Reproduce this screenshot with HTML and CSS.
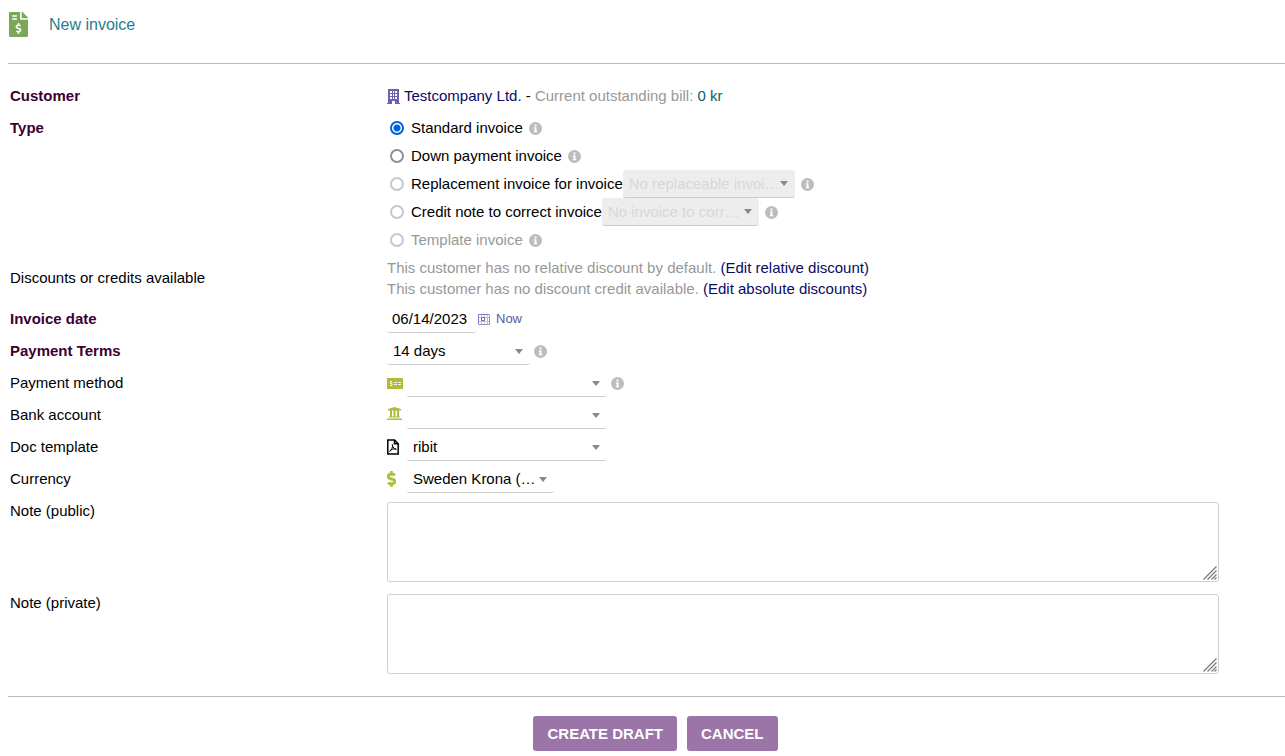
FILE: index.html
```html
<!DOCTYPE html>
<html lang="en">
<head>
<meta charset="utf-8">
<title>New invoice</title>
<link rel="stylesheet" href="styles.css">
</head>
<body>
<svg class="defs" aria-hidden="true">
  <symbol id="info" viewBox="0 0 13 13"><circle cx="6.5" cy="6.5" r="6.5" fill="#bcbcbc"/><path d="M5.5 2.5h2v1.8h-2zM4.8 5.3h2.7v3.8h.8v1.2H4.8V9.1h.8V6.5h-.8z" fill="#fff"/></symbol>
  <symbol id="arrow" viewBox="0 0 8 5"><path d="M0 0h8L4 5z" fill="#888"/></symbol>
  <symbol id="grip" viewBox="0 0 14 14"><path d="M.5 13.5l13-13M4.5 13.5l9-9M8.5 13.5l5-5M11.5 13.5l2-2" stroke="#777" stroke-width="1.2"/></symbol>
</svg>
<header class="title">
  <svg class="title-icon" viewBox="0 0 384 512" preserveAspectRatio="none" aria-hidden="true"><path fill="#7ca659" d="M377 105L279.1 7c-4.5-4.5-10.6-7-17-7H256v128h128v-6.1c0-6.3-2.5-12.4-7-16.9zm-153 31V0H24C10.7 0 0 10.7 0 24v464c0 13.3 10.7 24 24 24h336c13.3 0 24-10.7 24-24V160H248c-13.2 0-24-10.8-24-24zM64 72c0-4.420 3.580-8 8-8h80c4.420 0 8 3.580 8 8v16c0 4.420-3.580 8-8 8H72c-4.420 0-8-3.580-8-8V72zm0 80v-16c0-4.420 3.580-8 8-8h80c4.420 0 8 3.580 8 8v16c0 4.420-3.580 8-8 8H72c-4.420 0-8-3.580-8-8zm144 263.880V440c0 4.420-3.580 8-8 8h-16c-4.420 0-8-3.580-8-8v-24.290c-11.290-.58-22.270-4.520-31.370-11.350-3.900-2.930-4.100-8.770-.57-12.140l11.750-11.210c2.770-2.640 6.890-2.760 10.130-.73 3.870 2.420 8.260 3.720 12.820 3.720h28.110c6.500 0 11.800-5.920 11.800-13.190 0-5.950-3.610-11.190-8.770-12.730l-45-13.500c-18.590-5.580-31.580-23.420-31.580-43.390 0-24.520 19.050-44.440 42.670-45.070V232c0-4.420 3.580-8 8-8h16c4.420 0 8 3.580 8 8v24.290c11.290.58 22.270 4.510 31.370 11.350 3.900 2.930 4.100 8.770.57 12.140l-11.750 11.210c-2.770 2.640-6.890 2.760-10.130.73-3.870-2.430-8.260-3.720-12.820-3.720h-28.110c-6.500 0-11.800 5.920-11.800 13.190 0 5.950 3.610 11.190 8.770 12.730l45 13.500c18.590 5.580 31.580 23.420 31.580 43.390 0 24.530-19.050 44.440-42.670 45.070z"/></svg>
  <h1>New invoice</h1>
</header>
<form class="invoice">
  <div class="row">
    <span class="label required">Customer</span>
    <div class="value">
      <svg class="building" viewBox="0 0 13 15" aria-hidden="true"><path fill="#6c64ab" fill-rule="evenodd" d="M1 0h11v14h1v1H8v-3H5v3H0v-1h1zM3 2v2h2V2zm3 0v2h1V2zm2 0v2h2V2zM3 5v2h2V5zm3 0v2h1V5zm2 0v2h2V5zM3 8v2h2V8zm3 0v2h1V8zm2 0v2h2V8z"/></svg>
      <span><a href="#">Testcompany Ltd.</a> - <span class="muted">Current outstanding bill:</span> <a class="amount" href="#">0 kr</a></span>
    </div>
  </div>
  <div class="row types">
    <span class="label required" id="type-label">Type</span>
    <div class="options" role="radiogroup" aria-labelledby="type-label">
      <div class="option"><input type="radio" name="type" id="t1" checked><label for="t1">Standard invoice</label><svg class="info"><use href="#info"/></svg></div>
      <div class="option"><input type="radio" name="type" id="t2"><label for="t2">Down payment invoice</label><svg class="info"><use href="#info"/></svg></div>
      <div class="option"><input type="radio" name="type" id="t3" disabled><label for="t3">Replacement invoice for invoice</label><span class="select replace"><select disabled aria-label="Replaceable invoice"><option>No replaceable invoi…</option></select><svg><use href="#arrow"/></svg></span><svg class="info"><use href="#info"/></svg></div>
      <div class="option"><input type="radio" name="type" id="t4" disabled><label for="t4">Credit note to correct invoice</label><span class="select correct"><select disabled aria-label="Invoice to correct"><option>No invoice to corr…</option></select><svg><use href="#arrow"/></svg></span><svg class="info"><use href="#info"/></svg></div>
      <div class="option"><input type="radio" name="type" id="t5" disabled><label class="muted" for="t5">Template invoice</label><svg class="info"><use href="#info"/></svg></div>
    </div>
  </div>
  <div class="row discounts">
    <span class="label">Discounts or credits available</span>
    <div>
      <p><span class="muted">This customer has no relative discount by default.</span> <a href="#">(Edit relative discount)</a></p>
      <p><span class="muted">This customer has no discount credit available.</span> <a href="#">(Edit absolute discounts)</a></p>
    </div>
  </div>
  <div class="row">
    <label class="label required" for="date">Invoice date</label>
    <div class="value">
      <input class="date" id="date" type="text" value="06/14/2023">
      <button class="calendar" type="button" aria-label="Open calendar"><svg viewBox="0 0 12 11"><path fill="#fff" stroke="#c4c4c4" d="M.5.5h11v10H.5zM3.500 1v9M6.500 1v9M9.500 1v9M1 3.500h10M1 7.500h10"/><path fill="none" stroke="#999" d="M1 10.500h10.500V1"/><path fill="none" stroke="#8579c4" d="M.5 10V.5H11"/><path fill="#fff" stroke="#9050b0" d="M3.500 3.500h3v3h-3z"/></svg></button>
      <button class="now" type="button">Now</button>
    </div>
  </div>
  <div class="row">
    <label class="label required" for="terms">Payment Terms</label>
    <div class="value"><span class="select terms"><select id="terms"><option>14 days</option></select><svg><use href="#arrow"/></svg></span><svg class="info"><use href="#info"/></svg></div>
  </div>
  <div class="row">
    <label class="label" for="method">Payment method</label>
    <div class="value"><span class="lead"><svg width="16" height="11" viewBox="0 0 16 11"><path fill="#b0bb39" d="M0 0h16v11H0z"/><path fill="none" stroke="#fff" stroke-width=".9" d="M5 3.500H3.500v2H5v2H3M7 4.500h3M11 4.500h3M7 6.500h3M11 6.500h3"/></svg></span><span class="select wide"><select id="method"><option></option></select><svg><use href="#arrow"/></svg></span><svg class="info"><use href="#info"/></svg></div>
  </div>
  <div class="row">
    <label class="label" for="bank">Bank account</label>
    <div class="value"><span class="lead bank"><svg width="15" height="13" viewBox="0 0 15 13"><path fill="#b0bb39" d="M7.500 0L14 2v1.500H1V2zM3 3h2v7H3zM6.500 3h2v7h-2zM10 3h2v7h-2zM2 9.500h11v1H2zM0 11.500h15V13H0z"/></svg></span><span class="select wide"><select id="bank"><option></option></select><svg><use href="#arrow"/></svg></span></div>
  </div>
  <div class="row">
    <label class="label" for="template">Doc template</label>
    <div class="value"><span class="lead"><svg width="12" height="16" viewBox="0 0 12 16"><path fill="none" stroke="#000" stroke-width="1.500" d="M.8 1h6.700l3.700 3.700V15H.8zM7.500 1v3.700h3.700"/><path fill="none" stroke="#000" d="M5.300 5.500c1 2-.8 5.500-2.600 7 .5-2 4-3.300 6.600-2.300-1.800.3-3.800-1.900-4-4.700z"/></svg></span><span class="select wide"><select id="template"><option>ribit</option></select><svg><use href="#arrow"/></svg></span></div>
  </div>
  <div class="row">
    <label class="label" for="currency">Currency</label>
    <div class="value"><span class="lead"><svg width="9" height="16" viewBox="0 0 288 512"><path fill="#b0bb39" stroke="#b0bb39" stroke-width="16" d="M209.200 233.400l-108-31.600C88.700 198.200 80 186.500 80 173.500c0-16.300 13.200-29.500 29.500-29.500h66.300c12.200 0 24.200 3.700 34.200 10.500 6.100 4.100 14.300 3.100 19.500-2l34.800-34c7.100-6.900 6.100-18.400-1.800-24.500C238 74.800 207.400 64.100 176 64V16c0-8.800-7.200-16-16-16h-32c-8.800 0-16 7.200-16 16v48h-2.500C45.800 64-5.400 118.700.5 183.600c4.200 46.100 39.400 83.600 83.800 96.600l102.500 30c12.500 3.700 21.200 15.300 21.200 28.300 0 16.300-13.200 29.500-29.500 29.500h-66.300C100 368 88 364.300 78 357.500c-6.100-4.100-14.300-3.100-19.500 2l-34.800 34c-7.100 6.900-6.100 18.400 1.800 24.500 24.500 19.200 55.100 29.900 86.500 30v48c0 8.800 7.200 16 16 16h32c8.800 0 16-7.200 16-16v-48.200c46.600-.9 90.300-28.600 105.700-72.700 21.500-61.600-14.600-124.800-72.500-141.700z"/></svg></span><span class="select currency"><select id="currency"><option>Sweden Krona (…</option></select><svg><use href="#arrow"/></svg></span></div>
  </div>
  <div class="row note">
    <label class="label" for="public">Note (public)</label>
    <div class="area"><textarea id="public"></textarea><svg><use href="#grip"/></svg></div>
  </div>
  <div class="row note">
    <label class="label" for="private">Note (private)</label>
    <div class="area"><textarea id="private"></textarea><svg><use href="#grip"/></svg></div>
  </div>
  <div class="actions">
    <button type="submit">CREATE DRAFT</button>
    <button type="button">CANCEL</button>
  </div>
</form>
</body>
</html>
```
FILE: styles.css
```css
* { box-sizing: border-box; }
body { margin: 0 0 0 8px; background: #fff; color: #000; font: 15px/20px "Liberation Sans", Arial, sans-serif; }
input, select, textarea, button { font: inherit; color: inherit; }
svg { display: block; flex: none; }
p { margin: 0; }
a { color: #0a0a64; text-decoration: none; }
.defs { position: absolute; width: 0; height: 0; }
.muted { color: #989898; }
a.amount { color: #006666; }

.title { display: flex; align-items: center; gap: 21px; height: 64px; padding: 0 0 14px 1px; border-bottom: 1px solid #bbb; }
.title-icon { width: 19px; height: 25px; }
.title h1 { margin: 0; font-size: 16px; font-weight: 400; color: #25808c; }

.invoice { padding-top: 16px; }
.row { display: grid; grid-template-columns: 377px 1fr; align-items: center; min-height: 32px; padding-left: 2px; }
.label { line-height: 32px; }
.required { font-weight: 700; color: #3c0032; }
.value { display: flex; align-items: center; }
.building { width: 13px; height: 15px; margin-right: 4px; }
.info { width: 13px; height: 13px; }

.types { align-items: start; padding-top: 2px; }
.types .label { line-height: 28px; }
.option { display: flex; align-items: center; height: 28px; padding-left: 3px; }
.option input { appearance: none; flex: none; width: 14px; height: 14px; margin: 0 7px 0 0; border: 2px solid #8f8f9d; border-radius: 50%; background: #fff; }
.option input:checked { border-color: #0060df; background: radial-gradient(circle, #0060df 3px, #fff 4px); }
.option input:disabled { border-color: #c7c7ce; }
.discounts { padding-top: 3px; padding-bottom: 4px; }
.discounts p { line-height: 21px; }

.select { position: relative; height: 27px; }
.select select { appearance: none; display: block; width: 100%; height: 100%; padding: 0 18px 0 6px; border: 0; border-bottom: 1px solid #ccc; border-radius: 3px; background: transparent; white-space: nowrap; }
.select svg { position: absolute; right: 7px; top: 11px; width: 8px; height: 5px; pointer-events: none; }
.option .select { height: 28px; }
.select select:disabled { background: #ededed; color: #d8d8d8; opacity: 1; }
.replace { width: 172px; }
.correct { width: 157px; }
.terms { width: 143px; }
.wide { width: 200px; }
.currency { width: 147px; }
.value .info { margin-left: 4px; }
.option .info { margin: 1px 0 0 6px; }
.lead { width: 20px; flex: none; }
.bank { padding-bottom: 3px; }
.date { width: 89px; height: 27px; padding: 0 5px; border: 0; border-bottom: 1px solid #ccc; border-radius: 3px; }
.calendar, .now { padding: 0; border: 0; background: none; }
.calendar { margin-left: 2px; }
.calendar svg { width: 12px; height: 11px; }
.now { margin-left: 6px; font-size: 13px; color: #5a5a96; }

.note { align-items: start; min-height: 92px; }
.area { position: relative; width: calc(100% - 66px); padding-top: 7px; }
.area textarea { display: block; width: 100%; height: 80px; padding: 4px; border: 1px solid #d0d0d0; border-radius: 3px; resize: vertical; }
.area textarea::-webkit-resizer { display: none; }
.area svg { position: absolute; right: 2px; bottom: 2px; width: 14px; height: 14px; pointer-events: none; }

.actions { display: flex; justify-content: center; gap: 10px; margin-top: 17px; padding: 19px 0 5px 18px; border-top: 1px solid #bbb; }
.actions button { height: 35px; padding: 0 14px; border: 0; border-radius: 3px; background: #9b74a8; color: #fff; font-weight: 700; }
```
